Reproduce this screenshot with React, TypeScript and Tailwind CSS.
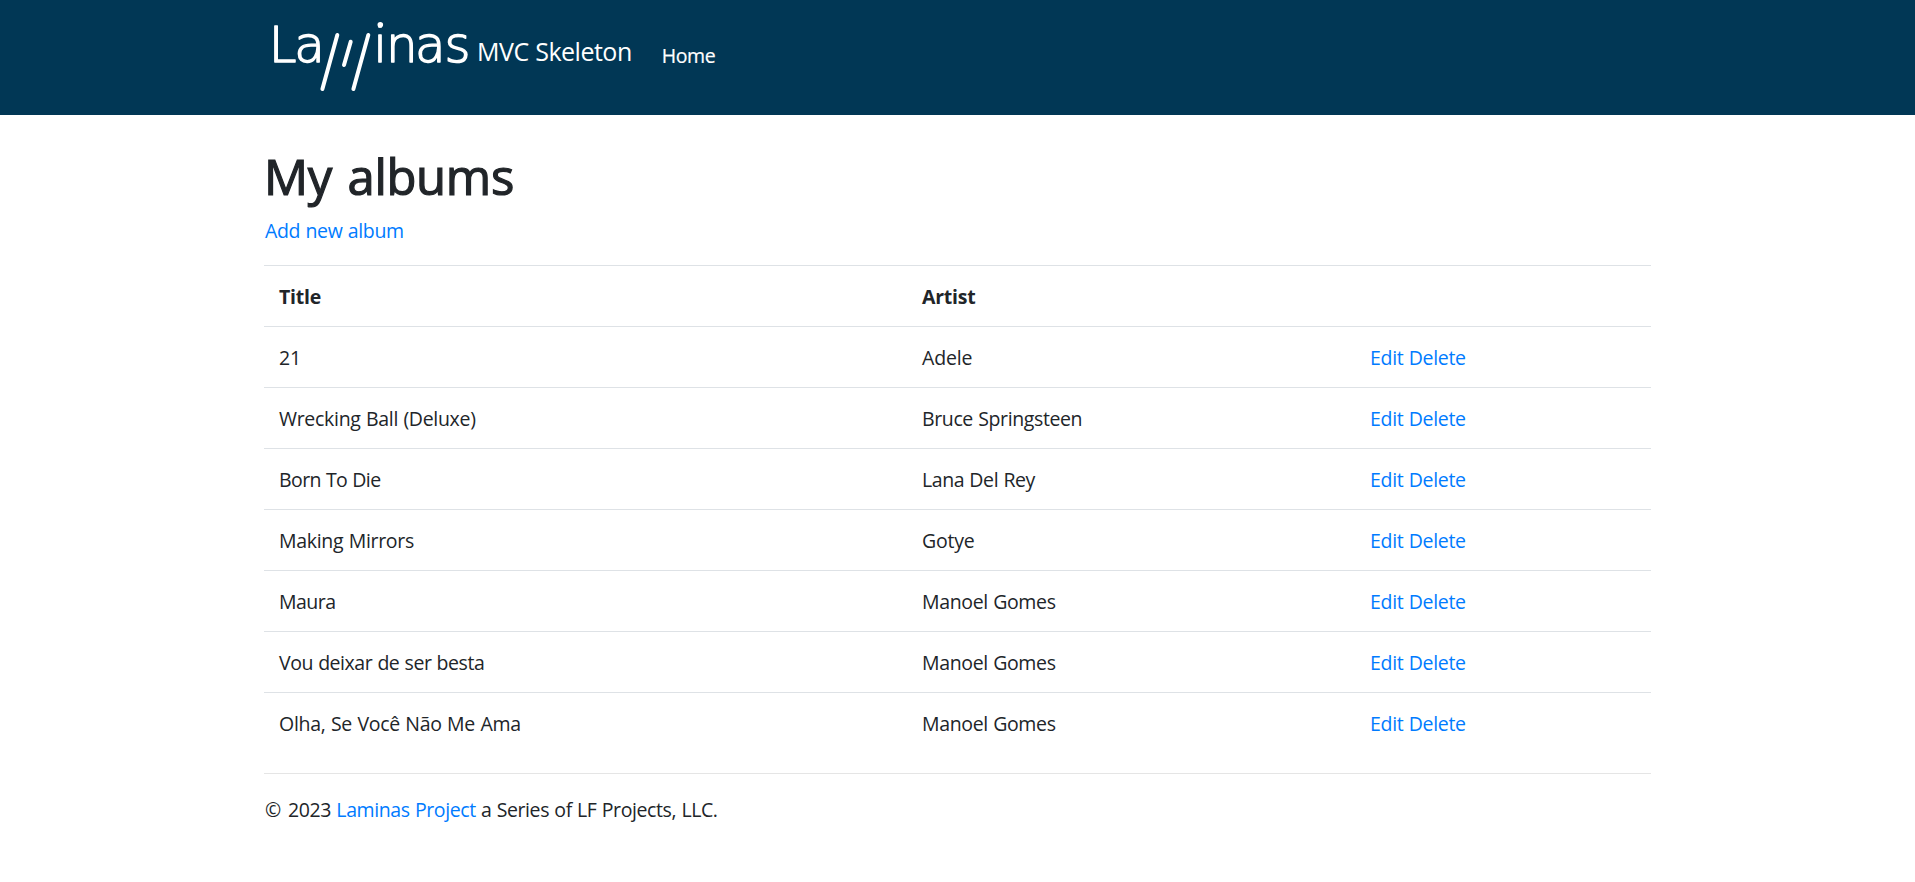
const albums = [
  { title: '21', titleClass: '', artist: 'Adele', artistClass: 'tracking-[-0.15px]' },
  { title: 'Wrecking Ball (Deluxe)', titleClass: 'tracking-[-0.3px]', artist: 'Bruce Springsteen', artistClass: 'tracking-[-0.38px]' },
  { title: 'Born To Die', titleClass: 'tracking-[-0.6px]', artist: 'Lana Del Rey', artistClass: 'tracking-[-0.42px]' },
  { title: 'Making Mirrors', titleClass: 'tracking-[-0.3px]', artist: 'Gotye', artistClass: '' },
  { title: 'Maura', titleClass: 'tracking-[-0.5px]', artist: 'Manoel Gomes', artistClass: 'tracking-[-0.35px]' },
  { title: 'Vou deixar de ser besta', titleClass: 'tracking-[-0.46px]', artist: 'Manoel Gomes', artistClass: 'tracking-[-0.35px]' },
  { title: 'Olha, Se Você Não Me Ama', titleClass: 'tracking-[-0.28px]', artist: 'Manoel Gomes', artistClass: 'tracking-[-0.35px]' },
];

function Logo() {
  return (
    <svg width="206" height="115" viewBox="264 0 206 115" className="block shrink-0" role="img" aria-label="Laminas">
      <g
        fill="#fff"
        stroke="#fff"
        strokeWidth="1.4"
        strokeLinejoin="round"
        fontFamily="'DejaVu Sans', sans-serif"
        fontWeight="200"
        fontSize="50"
        letterSpacing="0"
      >
        <text x="268.8 294.2" y="61.5">La</text>
        <text x="373.3 386.1 415.1 444.6" y="61.5">inas</text>
      </g>
      <circle cx="380.3" cy="24.8" r="2.8" fill="#fff" />
      <g stroke="#fff" strokeWidth="4" strokeLinecap="round">
        <path d="M337.3 35 322.4 89" />
        <path d="M350.7 41.7 344 65" />
        <path d="M368.3 35 353.4 89" />
      </g>
    </svg>
  );
}

function Header() {
  return (
    <header className="h-[115px] bg-[#013755] text-white">
      <div className="mx-auto flex w-[1387px] items-start">
        <a href="#" className="flex items-start">
          <Logo />
          <span className="ml-[7px] pt-[32px] text-[25px] leading-[38px] tracking-[-0.5px] whitespace-nowrap">MVC Skeleton</span>
        </a>
        <a href="#" className="ml-[30px] pt-[41px] text-[19.5px] leading-[30px] tracking-[-0.4px] [-webkit-text-stroke:0.2px_#fff]">Home</a>
      </div>
    </header>
  );
}

export default function App() {
  return (
    <div className="min-h-[882px] bg-white font-['Open_Sans','Noto_Sans',sans-serif] text-[19.5px] leading-[30px] tracking-[-0.24px] [word-spacing:0.6px] text-[#212529]">
      <Header />
      <main className="mx-auto w-[1387px] pt-[31px]">
        <h1 className="mb-[10px] text-[49px] leading-[60px] font-normal tracking-[-0.3px] [word-spacing:3px] [-webkit-text-stroke:1.2px_#212529]">My albums</h1>
        <p className="mb-[19px] pl-px">
          <a href="#" className="tracking-[-0.35px] text-[#007bff]">Add new album</a>
        </p>
        <table className="mb-[19px] w-full table-fixed border-collapse text-left">
          <colgroup>
            <col className="w-[643px]" />
            <col className="w-[448px]" />
            <col className="w-[296px]" />
          </colgroup>
          <tbody>
            <tr className="h-[61px] border-t border-[#dee2e6]">
              <th className="pt-[2px] pl-[15px] font-bold">Title</th>
              <th className="pt-[2px] pl-[15px] font-bold">Artist</th>
              <th />
            </tr>
            {albums.map((album) => (
              <tr key={album.title} className="h-[61px] border-t border-[#dee2e6]">
                <td className="pt-[2px] pl-[15px]">
                  <span className={album.titleClass}>{album.title}</span>
                </td>
                <td className="pt-[2px] pl-[15px]">
                  <span className={album.artistClass}>{album.artist}</span>
                </td>
                <td className="pt-[2px] pl-[15px] tracking-[-0.32px] text-[#007bff]">
                  <a href="#">Edit</a> <a href="#">Delete</a>
                </td>
              </tr>
            ))}
          </tbody>
        </table>
        <hr className="mb-[21px] border-t border-[#e5e5e5]" />
        <footer className="pl-px">
          <p className="tracking-[-0.4px]">
            <span className="mr-[2px]">©</span> 2023 <a href="#" className="text-[#007bff]">Laminas Project</a> a Series of LF Projects, LLC.
          </p>
        </footer>
      </main>
    </div>
  );
}
